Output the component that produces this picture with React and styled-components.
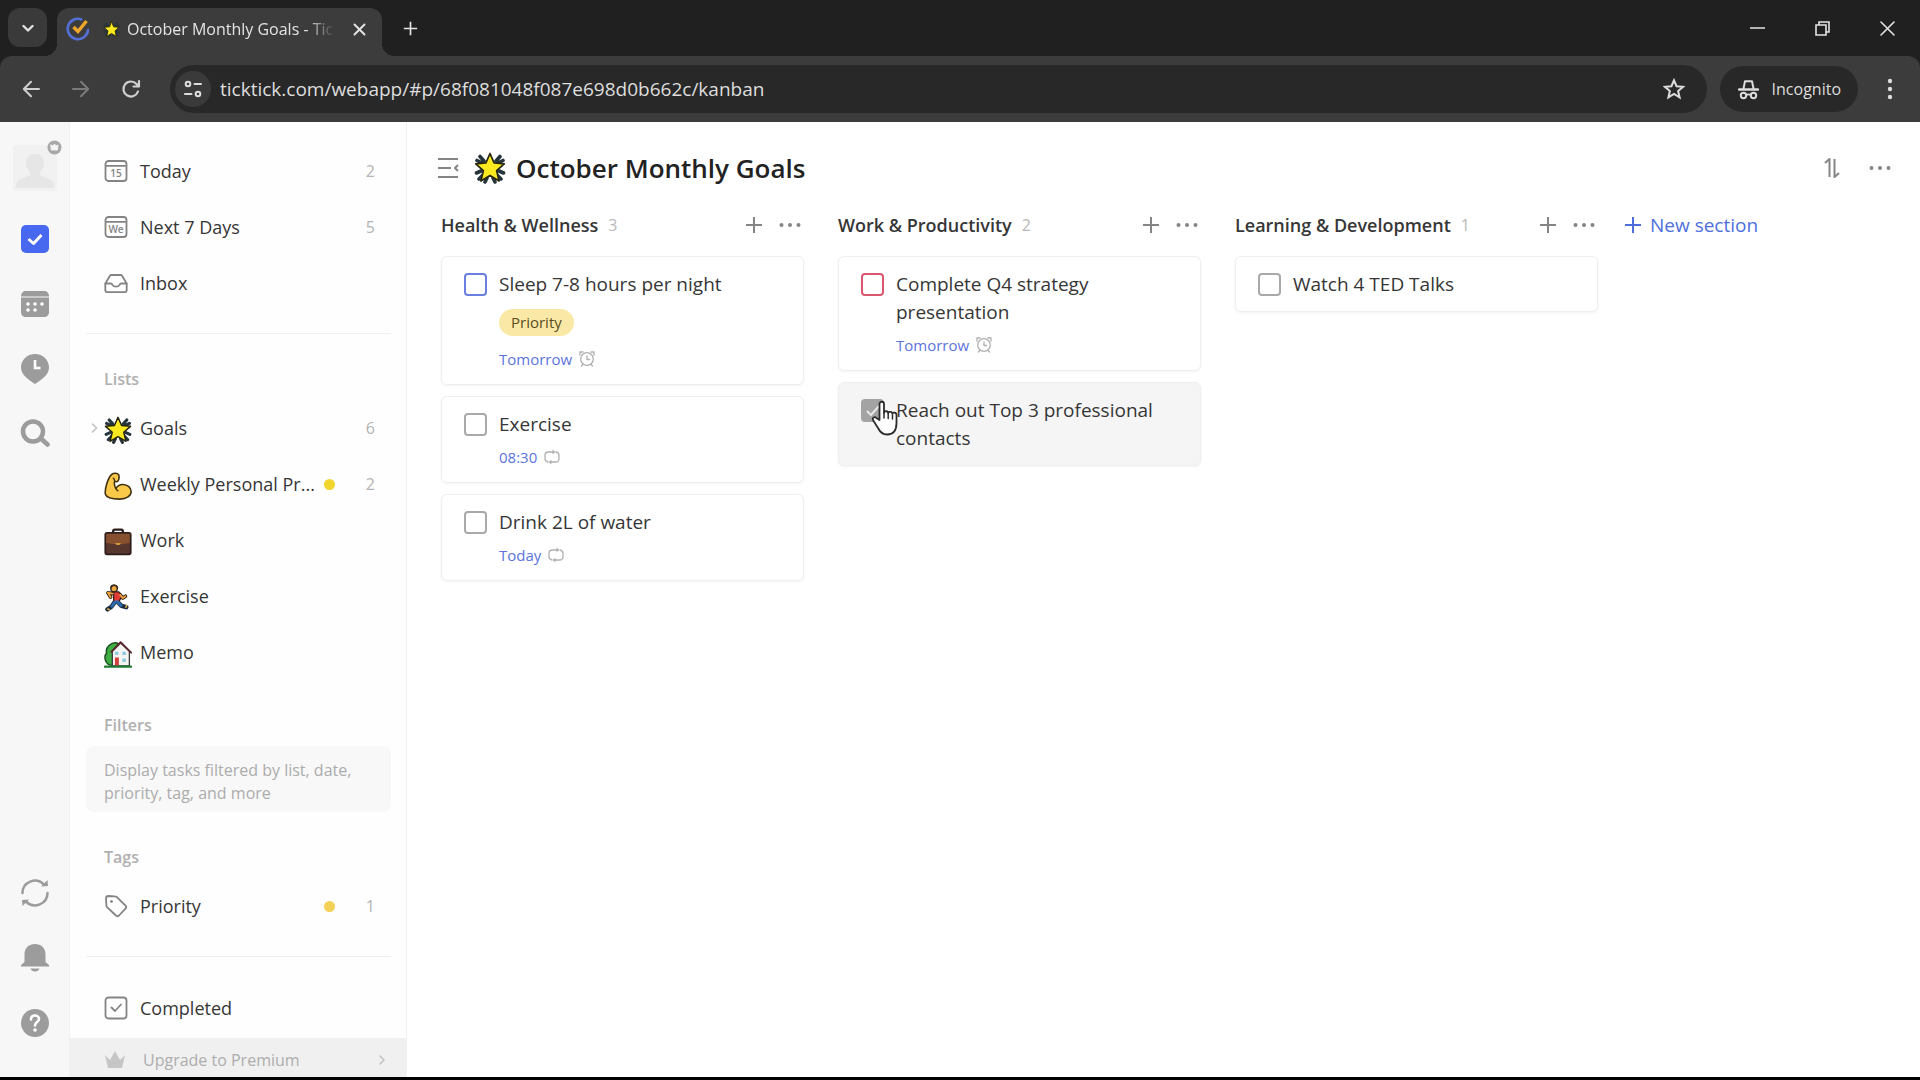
import React from 'react';
import styled, { createGlobalStyle } from 'styled-components';

const GlobalStyle = createGlobalStyle`
  * {
    box-sizing: border-box;
  }
  body {
    margin: 0;
    background: #000;
    font-family: 'Open Sans', 'Noto Sans', sans-serif;
    color: #363636;
  }
  button {
    display: inline-flex;
    align-items: center;
    justify-content: center;
    padding: 0;
    border: 0;
    background: none;
    color: inherit;
    font: inherit;
    cursor: pointer;
  }
  a {
    color: inherit;
    text-decoration: none;
  }
  svg {
    display: block;
    flex: none;
  }
`

const Page = styled.div`
  display: flex;
  flex-direction: column;
  height: 100vh;
  padding-bottom: 3px;
`

/* ---------- browser ---------- */

const TabStrip = styled.div`
  display: flex;
  align-items: flex-start;
  height: 56px;
  padding: 8px 0 0 8px;
  background: #202020;
  color: #e3e3e3;
`
const TabSearch = styled.button`
  width: 39px;
  height: 39px;
  margin-right: 10px;
  border-radius: 12px;
  background: #3a3a3a;
`
const Tab = styled.div`
  position: relative;
  display: flex;
  align-items: center;
  width: 325px;
  height: 48px;
  padding: 0 13px 6px 9px;
  border-radius: 12px 12px 0 0;
  background: #3c3c3c;

  &::before,
  &::after {
    content: '';
    position: absolute;
    bottom: 0;
    width: 12px;
    height: 12px;
  }
  &::before {
    left: -12px;
    background: radial-gradient(circle at 0 0, #202020 12px, #3c3c3c 12px);
  }
  &::after {
    right: -12px;
    background: radial-gradient(circle at 100% 0, #202020 12px, #3c3c3c 12px);
  }
`
const TabTitle = styled.span`
  flex: 1;
  margin-left: 7px;
  white-space: nowrap;
  font-size: 16px;
  mask-image: linear-gradient(to right, #000 86%, transparent);
`
const TabStar = styled.span`
  display: flex;
  margin-left: 13px;
`
const TabClose = styled.button`
  width: 20px;
  height: 24px;
  margin-left: 14px;
`
const NewTab = styled.button`
  width: 32px;
  height: 40px;
  margin-left: 12px;
`
const WindowButtons = styled.div`
  display: flex;
  margin-left: auto;
`
const WindowButton = styled.button`
  width: 65px;
  height: 40px;
`
const Toolbar = styled.div`
  background: #202020;
`
const ToolbarInner = styled.div`
  display: flex;
  align-items: center;
  height: 66px;
  padding: 0 14px 0 13px;
  border-radius: 12px 12px 0 0;
  background: #3c3c3c;
  color: #dcdcdc;
`
const NavButton = styled.button`
  width: 36px;
  height: 36px;
  margin-right: 14px;
  color: ${props => props.$dim ? '#7a7a7a' : '#d0d0d0'};
`
const AddressBar = styled.div`
  display: flex;
  flex: 1;
  align-items: center;
  height: 48px;
  margin-left: 7px;
  padding: 0 22px 0 5px;
  border-radius: 24px;
  background: #282828;
`
const SiteInfo = styled.button`
  width: 36px;
  height: 36px;
  border-radius: 50%;
  background: #3a3a3a;
`
const Url = styled.input`
  flex: 1;
  min-width: 0;
  margin-left: 9px;
  padding: 0;
  border: 0;
  outline: 0;
  background: none;
  color: #dedede;
  font-family: inherit;
  font-size: 19px;
`
const Incognito = styled.button`
  gap: 13px;
  height: 46px;
  margin: 0 16px 0 13px;
  padding: 0 17px 0 18px;
  border-radius: 23px;
  background: #282828;
  font-size: 16px;
`
const MenuButton = styled.button`
  width: 32px;
  height: 32px;
`

/* ---------- app ---------- */

const AppShell = styled.div`
  display: flex;
  flex: 1;
  min-height: 0;
  background: #fff;
`
const Rail = styled.nav`
  display: flex;
  flex-direction: column;
  align-items: center;
  width: 70px;
  padding: 23px 0 22px;
  background: #f7f7f7;
  border-right: 1px solid #f1f1f1;
  color: #9c9c9c;
`
const Avatar = styled.button`
  position: relative;
  width: 44px;
  height: 46px;
  margin-bottom: 15px;
  background: #f1f1f1;
  align-items: flex-end;
`
const AvatarBadge = styled.span`
  position: absolute;
  top: -5px;
  right: -5px;
`
const RailButton = styled.button`
  width: 44px;
  height: 65px;
`
const RailSpace = styled.div`
  flex: 1;
`
const Sidebar = styled.aside`
  display: flex;
  flex-direction: column;
  width: 337px;
  overflow: hidden;
  border-right: 1px solid #f1f1f1;
  background: #fefefe;
`
const SidebarBody = styled.div`
  flex: 1;
  padding: 21px 15px 0 16px;
`
const Row = styled.a`
  display: grid;
  grid-template-columns: 18px 36px 1fr 12px 39px;
  align-items: center;
  height: 56px;
  padding-right: 16px;
  font-size: 18px;
`
const RowIcon = styled.span`
  padding-top: ${props => props.$emoji ? '4px' : '0'};
  color: #848484;
`
const RowLabel = styled.span`
  white-space: nowrap;
`
const Dot = styled.span`
  grid-column: 4;
  width: 11px;
  height: 11px;
  border-radius: 50%;
  background: ${props => props.$color};
`
const Count = styled.span`
  grid-column: 5;
  color: #b4b4b4;
  font-size: 16px;
  text-align: right;
`
const Divider = styled.hr`
  height: 1px;
  margin: 22px 0 ${props => props.$gap}px;
  border: 0;
  background: #efefef;
`
const GroupLabel = styled.h2`
  margin: 0;
  padding: 0 18px;
  color: #b0b0b0;
  font-size: 16px;
  font-weight: 600;
  line-height: 22px;
`
const Group = styled.section`
  display: flex;
  flex-direction: column;
  gap: 10px;
  margin-bottom: ${props => props.$last ? '0' : '34px'};
`
const FilterHint = styled.p`
  margin: 0;
  padding: 13px 18px 7px;
  border-radius: 8px;
  background: #f8f8f8;
  color: #acacac;
  font-size: 16px;
  line-height: 23px;
`
const Upgrade = styled.a`
  display: flex;
  flex: none;
  align-items: center;
  height: 39px;
  padding: 4px 20px 0 34px;
  background: #f0f0f0;
  color: #adadad;
  font-size: 16px;
`
const UpgradeLabel = styled.span`
  flex: 1;
  margin-left: 17px;
`

/* ---------- board ---------- */

const Main = styled.main`
  flex: 1;
  min-width: 0;
  padding: 22px 26px 0 29px;
`
const Header = styled.header`
  display: flex;
  align-items: center;
  height: 48px;
  color: #858585;
`
const HeaderStar = styled.span`
  margin-left: 14px;
`
const Title = styled.h1`
  flex: 1;
  margin: 0 0 0 10px;
  color: #222;
  font-size: 26px;
  font-weight: 600;
`
const IconButton = styled.button`
  width: ${props => props.$size || 28}px;
  height: 28px;
  color: #858585;
`
const HeaderActions = styled.div`
  display: flex;
  gap: 20px;
`
const Board = styled.div`
  display: flex;
  align-items: flex-start;
  gap: 34px;
  margin-top: 16px;
  padding-left: 5px;
`
const Column = styled.section`
  flex: none;
  width: 363px;
`
const ColumnHead = styled.div`
  display: flex;
  align-items: center;
  height: 34px;
  margin-bottom: 14px;
`
const ColumnTitle = styled.h2`
  margin: 0;
  font-size: 18px;
  font-weight: 600;
  white-space: nowrap;
`
const ColumnCount = styled.span`
  flex: 1;
  margin-left: 10px;
  color: #b8b8b8;
  font-size: 16px;
`
const ColumnActions = styled.div`
  display: flex;
  gap: 8px;
`
const Cards = styled.ul`
  display: flex;
  flex-direction: column;
  gap: 11px;
  margin: 0;
  padding: 0;
  list-style: none;
`
const CardBox = styled.li`
  position: relative;
  display: flex;
  gap: 12px;
  padding: 13px 22px;
  border: 1px solid #efefef;
  border-radius: 6px;
  background: ${props => props.$hover ? '#f5f5f5' : '#fff'};
  box-shadow: 0 1px 3px rgba(0, 0, 0, 0.05);
`
const Check = styled.input`
  flex: none;
  appearance: none;
  width: 23px;
  height: 23px;
  margin: 3px 0 0;
  border: 2px solid ${props => props.$color};
  border-radius: 4px;

  &:checked {
    border-color: #a3a3a3;
    background: #a3a3a3 url("data:image/svg+xml,%3Csvg xmlns='http://www.w3.org/2000/svg' viewBox='0 0 19 19'%3E%3Cpath d='M4 10l4 4 8-9' fill='none' stroke='%23e8e8e8' stroke-width='2'/%3E%3C/svg%3E") center / contain;
  }
`
const CardBody = styled.div`
  flex: 1;
`
const CardTitle = styled.label`
  display: block;
  font-size: 19px;
  line-height: 28px;
`
const Tag = styled.span`
  display: block;
  width: fit-content;
  margin: 11px 0;
  padding: 0 12px;
  border-radius: 14px;
  background: #fae9a6;
  color: #5a4d22;
  font-size: 15px;
  line-height: 27px;
`
const Due = styled.div`
  display: flex;
  align-items: center;
  gap: 7px;
  margin-top: 7px;
  color: #5b74dc;
  font-size: 15px;
  line-height: 24px;

  svg {
    color: #b0b0b0;
  }
`
const Pointer = styled.span`
  position: absolute;
  top: 17px;
  left: 32px;
`
const NewSection = styled.button`
  gap: 8px;
  height: 34px;
  margin-left: -8px;
  color: #4d6fdc;
  font-size: 19px;
  font-weight: 500;
`

/* ---------- icons ---------- */

const Icon = ({ size = 24, w, h, sw = 2, box = '0 0 24 24', children }) => (
    <svg width={w || size} height={h || size} viewBox={box} fill="none" stroke="currentColor"
        strokeWidth={sw} strokeLinecap="round" strokeLinejoin="round" aria-hidden="true">
        {children}
    </svg>
)

const Plus = ({ size = 18, sw = 2 }) => (
    <Icon size={size} box="0 0 18 18" sw={sw}><path d="M9 1v16M1 9h16" strokeLinecap="butt" /></Icon>
)

const More = () => (
    <Icon w={22} h={6} box="0 0 22 6">
        <g fill="currentColor" stroke="none">
            <circle cx="2.5" cy="3" r="2" /><circle cx="11" cy="3" r="2" /><circle cx="19.5" cy="3" r="2" />
        </g>
    </Icon>
)

const GlowStar = ({ size = 28 }) => (
    <Icon size={size} box="0 0 32 32">
        <path d="M10 9L6 4.500M22 9l4-4.500M8 11L3 8.500M24 11l5-2.500M7 19l-4.500 2M25 19l4.500 2M9 23l-4 4M23 23l4 4M13 26l-2 4M19 26l2 4"
            stroke="#26343c" strokeWidth="3.600" />
        <path d="M16 1.500l4.100 9.400 10.200.9-7.700 6.800 2.500 10.400L16 23.600 6.900 29l2.500-10.400-7.700-6.800 10.200-.9z"
            fill="#fbea20" stroke="#26260f" strokeWidth="1.700" />
    </Icon>
)

const Muscle = () => (
    <Icon size={28} box="0 0 32 32">
        <path d="M8.500 3c2.500-2 7-2 8.200 0 .8 1.500.8 6-.9 7.500-1 .8-2.400.6-3.600.2-.8 3 .1 6.300 1.300 8.300 2-3.500 5-5 8.500-4.700 5 .3 9 3.700 9 7.900 0 5-5 8.800-13 8.800-8.500 0-15-1-16.400-5.500C.5 19.500 4.500 7 8.500 3z"
            fill="#fbc94a" stroke="#3f3010" strokeWidth="1.800" />
        <path d="M12.200 10.500c0-1.800-.6-2.800-1.600-3.500M13.500 18.500c.4 1.500 1.300 2.500 2.500 3" stroke="#3f3010" strokeWidth="1.500" />
    </Icon>
)

const Briefcase = () => (
    <Icon size={28} box="0 0 32 32">
        <path d="M10.500 6V3.500c0-1 .6-1.700 1.600-1.700h7.800c1 0 1.600.7 1.600 1.700V6" stroke="#2b1d1b" strokeWidth="2.600" />
        <rect x="1.500" y="5.500" width="29" height="24.500" rx="2" fill="#57362d" stroke="#2b1d1b" strokeWidth="2" />
        <path d="M2.500 6.500h27V17L16 19 2.500 17z" fill="#87502f" stroke="none" />
        <path d="M12.500 17h7l-2 2.500h-3z" fill="#d59a35" stroke="none" />
    </Icon>
)

const Runner = () => (
    <Icon size={28} box="0 0 32 32">
        <path d="M10 11l-5.500-1 3 5M18 12l3.500 4 3-2" stroke="#30241a" strokeWidth="4.200" />
        <path d="M12 21l-3.500 5-4.500 3M15 20l5 5 5.500 1.500" stroke="#1b2c40" strokeWidth="5" />
        <path d="M11 9h6l3.500 4.500-4 8-5.500-2z" fill="#e23b35" stroke="#3a211c" strokeWidth="1.500" />
        <path d="M12.500 20.500L9 25.500M15 20l4.500 4.500" stroke="#2b6cb0" strokeWidth="3.200" />
        <path d="M4.500 28.500l1.500 1M25 26.500l1-2" stroke="#c9a24c" strokeWidth="2" />
        <path d="M10 11l-5.500-1 3 5M18.500 12.500l3 3.500 3-2" stroke="#e8a13c" strokeWidth="2.200" />
        <circle cx="11.500" cy="5" r="3.700" fill="#eda843" stroke="#37281a" strokeWidth="1.600" />
        <path d="M8 4c1-3.500 6-3.500 7.500 0" stroke="#37281a" strokeWidth="1.800" />
    </Icon>
)

const House = () => (
    <Icon size={28} box="0 0 32 32">
        <path d="M9 29C0 28 0 18 3 15 1 8 9 2 15 3.500L20 9v20z" fill="#3fae42" stroke="#1d4d22" strokeWidth="1.700" />
        <path d="M9.500 13L19 3.500 29 13v16.500H9.500z" fill="#f4f5f2" stroke="#3c3c3c" strokeWidth="1.500" />
        <path d="M8.500 13.500L19 2.500l12 12" stroke="#5c2830" strokeWidth="2.200" />
        <path d="M12.500 20h4.500v9.500h-4.500z" fill="#d33f3d" stroke="none" />
        <path d="M12.500 13.500h4v3.500h-4zM21 13.500h4v3.500h-4zM21 21h4v4h-4z" fill="#8ecbe0" stroke="none" />
        <path d="M1 30.500h30" stroke="#1f7a32" strokeWidth="2.500" />
    </Icon>
)

const CalendarIcon = ({ text }) => (
    <Icon size={24} sw={1.8}>
        <rect x="1.500" y="2" width="21" height="20" rx="3" />
        <path d="M2 6.800h20" />
        <text x="12" y="18" textAnchor="middle" fontSize="10" fontWeight="600" fill="currentColor" stroke="none">{text}</text>
    </Icon>
)

const InboxIcon = () => (
    <Icon size={24} sw={1.8}>
        <path d="M1.300 12.500L5.800 5c.4-.7 1-1 1.800-1h8.800c.8 0 1.400.3 1.800 1l4.500 7.500V19c0 1.400-.8 2.200-2.200 2.200h-17c-1.400 0-2.200-.8-2.200-2.200z" />
        <path d="M1.500 12.500H7c.8 0 1 .4 1.300 1.100.7 1.300 1.900 2.100 3.700 2.100s3-.8 3.700-2.100c.3-.7.5-1.100 1.300-1.100h5.500" />
    </Icon>
)

const TagIcon = () => (
    <Icon size={24} sw={1.8}>
        <path d="M2 4.500C2 2.800 3 2 4.500 2l6.300.3c.9 0 1.500.3 2.100.9l8.600 8.500c.9.900.9 2 0 3l-6.500 6.800c-1 1-2.200 1-3.100 0L3.300 13.300c-.6-.6-.9-1.200-.9-2z" />
        <circle cx="7.500" cy="7.500" r="1" fill="currentColor" strokeWidth="1" />
    </Icon>
)

const CompletedIcon = () => (
    <Icon size={24} sw={1.8}>
        <rect x="1.500" y="1.500" width="21" height="21" rx="3" />
        <path d="M7.500 11.500l3.500 3.500 6-6.500" />
    </Icon>
)

const AlarmIcon = () => (
    <Icon size={16} box="0 0 16 16" sw={1.3}>
        <circle cx="8" cy="8" r="6.300" />
        <path d="M8 4.800v3.700h2.500M1 4V1h3M15 4V1h-3M2.500 15l1.300-1.500M13.500 15l-1.300-1.500" />
    </Icon>
)

const RepeatIcon = () => (
    <Icon size={16} box="0 0 16 16" sw={1.3}>
        <path d="M4 13C2.200 12.500 1 11.500 1 9.500V6.500C1 4.500 2.500 3 4.500 3H10M12 3c1.800.5 3 1.500 3 3.500v3c0 2-1.500 3.500-3.500 3.500H6" />
        <path d="M9 1.200L11 3 9 4.500zM7 11.500L5 13l2 1.800z" fill="currentColor" strokeWidth=".6" />
    </Icon>
)

const HandIcon = () => (
    <Icon w={28} h={36} box="0 0 28 36" sw={1.8}>
        <path d="M8.500 20V4c0-3 4.500-3 4.500 0v9c0-2.500 4.200-2.300 4.200.3 0-2.200 4.300-2 4.300.6 0-2 4-1.800 4 1V23c0 7-3 11.500-9.500 11.500-5 0-7-2.500-9-6.500l-4.700-7.500c-1.600-2.700 1.400-4.500 3.200-2.500z"
            fill="#fff" stroke="#2c2c2c" />
        <path d="M13 13v5M17.200 14v4.500M21.500 15v4" stroke="#2c2c2c" strokeWidth="1.500" />
    </Icon>
)

/* ---------- data ---------- */

const smartLists = [
    { label: 'Today', count: 2, icon: <CalendarIcon text="15" /> },
    { label: 'Next 7 Days', count: 5, icon: <CalendarIcon text="We" /> },
    { label: 'Inbox', icon: <InboxIcon /> },
]

const lists = [
    { label: 'Goals', count: 6, icon: <GlowStar />, emoji: true, caret: true },
    { label: 'Weekly Personal Pr...', count: 2, icon: <Muscle />, emoji: true, dot: '#f2d62e' },
    { label: 'Work', icon: <Briefcase />, emoji: true },
    { label: 'Exercise', icon: <Runner />, emoji: true },
    { label: 'Memo', icon: <House />, emoji: true },
]

const columns = [
    {
        title: 'Health & Wellness',
        tasks: [
            { id: 'sleep', title: 'Sleep 7-8 hours per night', tag: 'Priority', due: 'Tomorrow', icon: <AlarmIcon />, color: '#6a7fe0' },
            { id: 'exercise', title: 'Exercise', due: '08:30', icon: <RepeatIcon /> },
            { id: 'water', title: 'Drink 2L of water', due: 'Today', icon: <RepeatIcon /> },
        ],
    },
    {
        title: 'Work & Productivity',
        tasks: [
            { id: 'q4', title: 'Complete Q4 strategy presentation', due: 'Tomorrow', icon: <AlarmIcon />, color: '#d9576f' },
            { id: 'contacts', title: 'Reach out Top 3 professional contacts', done: true },
        ],
    },
    {
        title: 'Learning & Development',
        tasks: [{ id: 'ted', title: 'Watch 4 TED Talks' }],
    },
]

/* ---------- components ---------- */

const Caret = ({ w = 9 }) => (
    <Icon w={w} h={12} box="0 0 9 12" sw={1.6}><path d="M3 2l4 4-4 4" stroke="#c2c2c2" /></Icon>
)

const ListRow = ({ item }) => (
    <Row href="#list">
        <span>{item.caret && <Caret w={16} />}</span>
        <RowIcon $emoji={item.emoji}>{item.icon}</RowIcon>
        <RowLabel>{item.label}</RowLabel>
        {item.dot && <Dot $color={item.dot} />}
        <Count>{item.count}</Count>
    </Row>
)

const Card = ({ task }) => (
    <CardBox $hover={task.done}>
        <Check type="checkbox" id={task.id} defaultChecked={task.done} $color={task.color || '#a9a9a9'} />
        <CardBody>
            <CardTitle htmlFor={task.id}>{task.title}</CardTitle>
            {task.tag && <Tag>{task.tag}</Tag>}
            {task.due && <Due>{task.due}{task.icon}</Due>}
        </CardBody>
        {task.done && <Pointer><HandIcon /></Pointer>}
    </CardBox>
)

const Browser = () => (
    <>
        <TabStrip>
            <TabSearch aria-label="Search tabs">
                <Icon size={14} box="0 0 14 14" sw={2.4}><path d="M2.500 5L7 9.500 11.500 5" /></Icon>
            </TabSearch>
            <Tab>
                <Icon size={24} sw={2.6}>
                    <path d="M12 1.800a10.200 10.200 0 1 0 9.900 8.200" stroke="#5470d6" transform="rotate(18 12 12)" />
                    <path d="M7.500 10l4.500 4.500L20.500 4" stroke="#f0a52c" strokeWidth="3.400" strokeLinecap="butt" strokeLinejoin="miter" />
                </Icon>
                <TabStar><GlowStar size={17} /></TabStar>
                <TabTitle>October Monthly Goals - Tic</TabTitle>
                <TabClose aria-label="Close tab">
                    <Icon size={13} box="0 0 13 13"><path d="M1.500 1.500l10 10M11.500 1.500l-10 10" /></Icon>
                </TabClose>
            </Tab>
            <NewTab aria-label="New tab"><Plus size={15} /></NewTab>
            <WindowButtons>
                <WindowButton aria-label="Minimize">
                    <Icon size={15} box="0 0 15 15" sw={1.6}><path d="M.5 7h14" /></Icon>
                </WindowButton>
                <WindowButton aria-label="Restore">
                    <Icon size={15} box="0 0 15 15" sw={1.6}>
                        <path d="M1 4h10v10H1zM4 3.500V1h10v10h-2.500" strokeLinejoin="miter" />
                    </Icon>
                </WindowButton>
                <WindowButton aria-label="Close window">
                    <Icon size={15} box="0 0 15 15" sw={1.6}><path d="M1 1l13 13M14 1L1 14" /></Icon>
                </WindowButton>
            </WindowButtons>
        </TabStrip>
        <Toolbar>
            <ToolbarInner>
                <NavButton aria-label="Back">
                    <Icon size={18} box="0 0 18 18"><path d="M17 9H2M9 1.800L1.800 9 9 16.200" /></Icon>
                </NavButton>
                <NavButton aria-label="Forward" $dim>
                    <Icon size={18} box="0 0 18 18"><path d="M1 9h15M9 1.800L16.200 9 9 16.200" /></Icon>
                </NavButton>
                <NavButton aria-label="Reload">
                    <Icon size={20} box="0 0 20 20" sw={2.2}><path d="M17 12.500A7.500 7.500 0 1 1 15.500 5L18 7.500M18 2v5.500h-5.500" /></Icon>
                </NavButton>
                <AddressBar>
                    <SiteInfo aria-label="Site information">
                        <Icon size={18} box="0 0 18 18">
                            <circle cx="4" cy="4" r="2.300" /><path d="M10.500 4H17M1 14h6.500" /><circle cx="14" cy="14" r="2.300" />
                        </Icon>
                    </SiteInfo>
                    <Url aria-label="Address" defaultValue="ticktick.com/webapp/#p/68f081048f087e698d0b662c/kanban" />
                    <Icon size={22} sw={2.2}>
                        <path d="M12 2.500l2.800 6.500 7 .6-5.300 4.600 1.600 6.900-6.100-3.700-6.100 3.700 1.600-6.900L2.200 9.600l7-.6z" strokeLinejoin="miter" />
                    </Icon>
                </AddressBar>
                <Incognito>
                    <Icon size={21} box="0 0 21 20">
                        <path d="M1 10h19" strokeWidth="2.400" />
                        <path d="M5.500 9L7 1.800h7L15.500 9" />
                        <circle cx="5.500" cy="16" r="2.700" /><circle cx="15.500" cy="16" r="2.700" /><path d="M8.300 15.500c1-.8 3.400-.8 4.400 0" />
                    </Icon>
                    Incognito
                </Incognito>
                <MenuButton aria-label="Browser menu">
                    <Icon w={6} h={22} box="0 0 6 22">
                        <g fill="currentColor" stroke="none">
                            <circle cx="3" cy="3" r="2.200" /><circle cx="3" cy="11" r="2.200" /><circle cx="3" cy="19" r="2.200" />
                        </g>
                    </Icon>
                </MenuButton>
            </ToolbarInner>
        </Toolbar>
    </>
)

const RailNav = () => (
    <Rail>
        <Avatar aria-label="Account">
            <Icon w={40} h={40} box="0 0 40 40">
                <path d="M20 3c6 0 9 4 9 9 0 4-2 7-4 9v3l11 5c2 1 3 3 3 8H1c0-5 1-7 3-8l11-5v-3c-2-2-4-5-4-9 0-5 3-9 9-9z" fill="#e6e6e6" stroke="none" />
            </Icon>
            <AvatarBadge>
                <Icon size={15} box="0 0 15 15">
                    <circle cx="7.500" cy="7.500" r="7" fill="#a8a8a8" stroke="none" />
                    <path d="M4 5l2 1 1.500-2L9 6l2-1-.5 5h-6z" fill="#f5f5f5" stroke="#f5f5f5" strokeWidth=".8" />
                </Icon>
            </AvatarBadge>
        </Avatar>
        <RailButton aria-label="Tasks">
            <Icon size={28} box="0 0 28 28">
                <rect width="28" height="28" rx="5" fill="#4968f0" stroke="none" />
                <path d="M7.500 14l5 4.500 8-8.500" stroke="#fff" strokeWidth="3" strokeLinecap="butt" />
            </Icon>
        </RailButton>
        <RailButton aria-label="Calendar">
            <Icon size={28} box="0 0 28 28">
                <path d="M0 6.500C0 3 2 1 5 1h18c3 0 5 2 5 5.500z" fill="currentColor" stroke="none" />
                <path d="M0 7.500h28V22c0 3-2 5-5 5H5c-3 0-5-2-5-5z" fill="currentColor" stroke="none" />
                <g fill="#fff" stroke="none">
                    <circle cx="7" cy="14" r="1.800" /><circle cx="14" cy="14" r="1.800" /><circle cx="21" cy="14" r="1.800" />
                    <circle cx="7" cy="20" r="1.800" /><circle cx="14" cy="20" r="1.800" />
                </g>
            </Icon>
        </RailButton>
        <RailButton aria-label="Focus">
            <Icon w={28} h={30} box="0 0 28 30">
                <path d="M14 0c8 0 14 6 14 13.500S20 26 14 30C8 26 0 21 0 13.500S6 0 14 0z" fill="currentColor" stroke="none" />
                <path d="M14 6v8h5.500" stroke="#fff" strokeWidth="2.600" strokeLinejoin="miter" strokeLinecap="butt" />
            </Icon>
        </RailButton>
        <RailButton aria-label="Search">
            <Icon size={30} box="0 0 30 30" sw={4.5}>
                <circle cx="13" cy="12.500" r="10" /><path d="M22 20.500l5.500 5" />
            </Icon>
        </RailButton>
        <RailSpace />
        <RailButton aria-label="Sync">
            <Icon size={28} box="0 0 28 28" sw={2.5}>
                <path d="M1.500 14C1.500 3 15-2.500 23 5.500M26.500 14C26.500 25 13 30.500 5 22.500" />
                <path d="M20 7.500l7-.5-.5-6zM8 20.500l-7 .5.500 6z" fill="currentColor" stroke="none" />
            </Icon>
        </RailButton>
        <RailButton aria-label="Notifications">
            <Icon size={28} box="0 0 28 28">
                <path d="M14 0c6 0 10.500 4 10.500 10v8l3.500 3v1.500H0V21l3.500-3v-8C3.500 4 8 0 14 0zM9.500 24.500h9c-1 4-8 4-9 0z" fill="currentColor" stroke="none" />
            </Icon>
        </RailButton>
        <RailButton aria-label="Help">
            <Icon size={28} box="0 0 28 28">
                <circle cx="14" cy="14" r="14" fill="currentColor" stroke="none" />
                <path d="M10 10.500c0-5.500 8-5 8-.5 0 3-4 3.200-4 6.500" stroke="#fff" strokeWidth="2.600" />
                <circle cx="14" cy="21" r="1.800" fill="#fff" stroke="none" />
            </Icon>
        </RailButton>
    </Rail>
)

const App = () => {
    return (
        <Page>
            <GlobalStyle />
            <Browser />
            <AppShell>
                <RailNav />
                <Sidebar>
                    <SidebarBody>
                        {smartLists.map(item => <ListRow key={item.label} item={item} />)}
                        <Divider $gap={34} />
                        <Group>
                            <GroupLabel>Lists</GroupLabel>
                            <div>{lists.map(item => <ListRow key={item.label} item={item} />)}</div>
                        </Group>
                        <Group>
                            <GroupLabel>Filters</GroupLabel>
                            <FilterHint>Display tasks filtered by list, date, priority, tag, and more</FilterHint>
                        </Group>
                        <Group $last>
                            <GroupLabel>Tags</GroupLabel>
                            <ListRow item={{ label: 'Priority', count: 1, icon: <TagIcon />, dot: '#f3d157' }} />
                        </Group>
                        <Divider $gap={23} />
                        <ListRow item={{ label: 'Completed', icon: <CompletedIcon /> }} />
                    </SidebarBody>
                    <Upgrade href="#premium">
                        <Icon w={22} h={20} box="0 0 22 20">
                            <path d="M1 5l5 5 5-9 5 9 5-5-3 13H4z" fill="#c6c6c6" stroke="none" />
                        </Icon>
                        <UpgradeLabel>Upgrade to Premium</UpgradeLabel>
                        <Caret />
                    </Upgrade>
                </Sidebar>
                <Main>
                    <Header>
                        <IconButton aria-label="Collapse sidebar" $size={24}>
                            <Icon w={22} h={20} box="0 0 22 20">
                                <path d="M1 1h20M1 10h13M1 19h20M21 7l-3 3 3 3" strokeLinecap="butt" />
                            </Icon>
                        </IconButton>
                        <HeaderStar><GlowStar size={32} /></HeaderStar>
                        <Title>October Monthly Goals</Title>
                        <HeaderActions>
                            <IconButton aria-label="Sort">
                                <Icon w={16} h={20} box="0 0 16 20">
                                    <path d="M1 5l4.500-4v18M15 15l-4.500 4V1" strokeLinecap="butt" />
                                </Icon>
                            </IconButton>
                            <IconButton aria-label="More"><More /></IconButton>
                        </HeaderActions>
                    </Header>
                    <Board>
                        {columns.map(column => (
                            <Column key={column.title}>
                                <ColumnHead>
                                    <ColumnTitle>{column.title}</ColumnTitle>
                                    <ColumnCount>{column.tasks.length}</ColumnCount>
                                    <ColumnActions>
                                        <IconButton aria-label="Add task"><Plus /></IconButton>
                                        <IconButton aria-label="Section menu"><More /></IconButton>
                                    </ColumnActions>
                                </ColumnHead>
                                <Cards>
                                    {column.tasks.map(task => <Card key={task.id} task={task} />)}
                                </Cards>
                            </Column>
                        ))}
                        <NewSection><Plus />New section</NewSection>
                    </Board>
                </Main>
            </AppShell>
        </Page>
    );
}

export default App;
